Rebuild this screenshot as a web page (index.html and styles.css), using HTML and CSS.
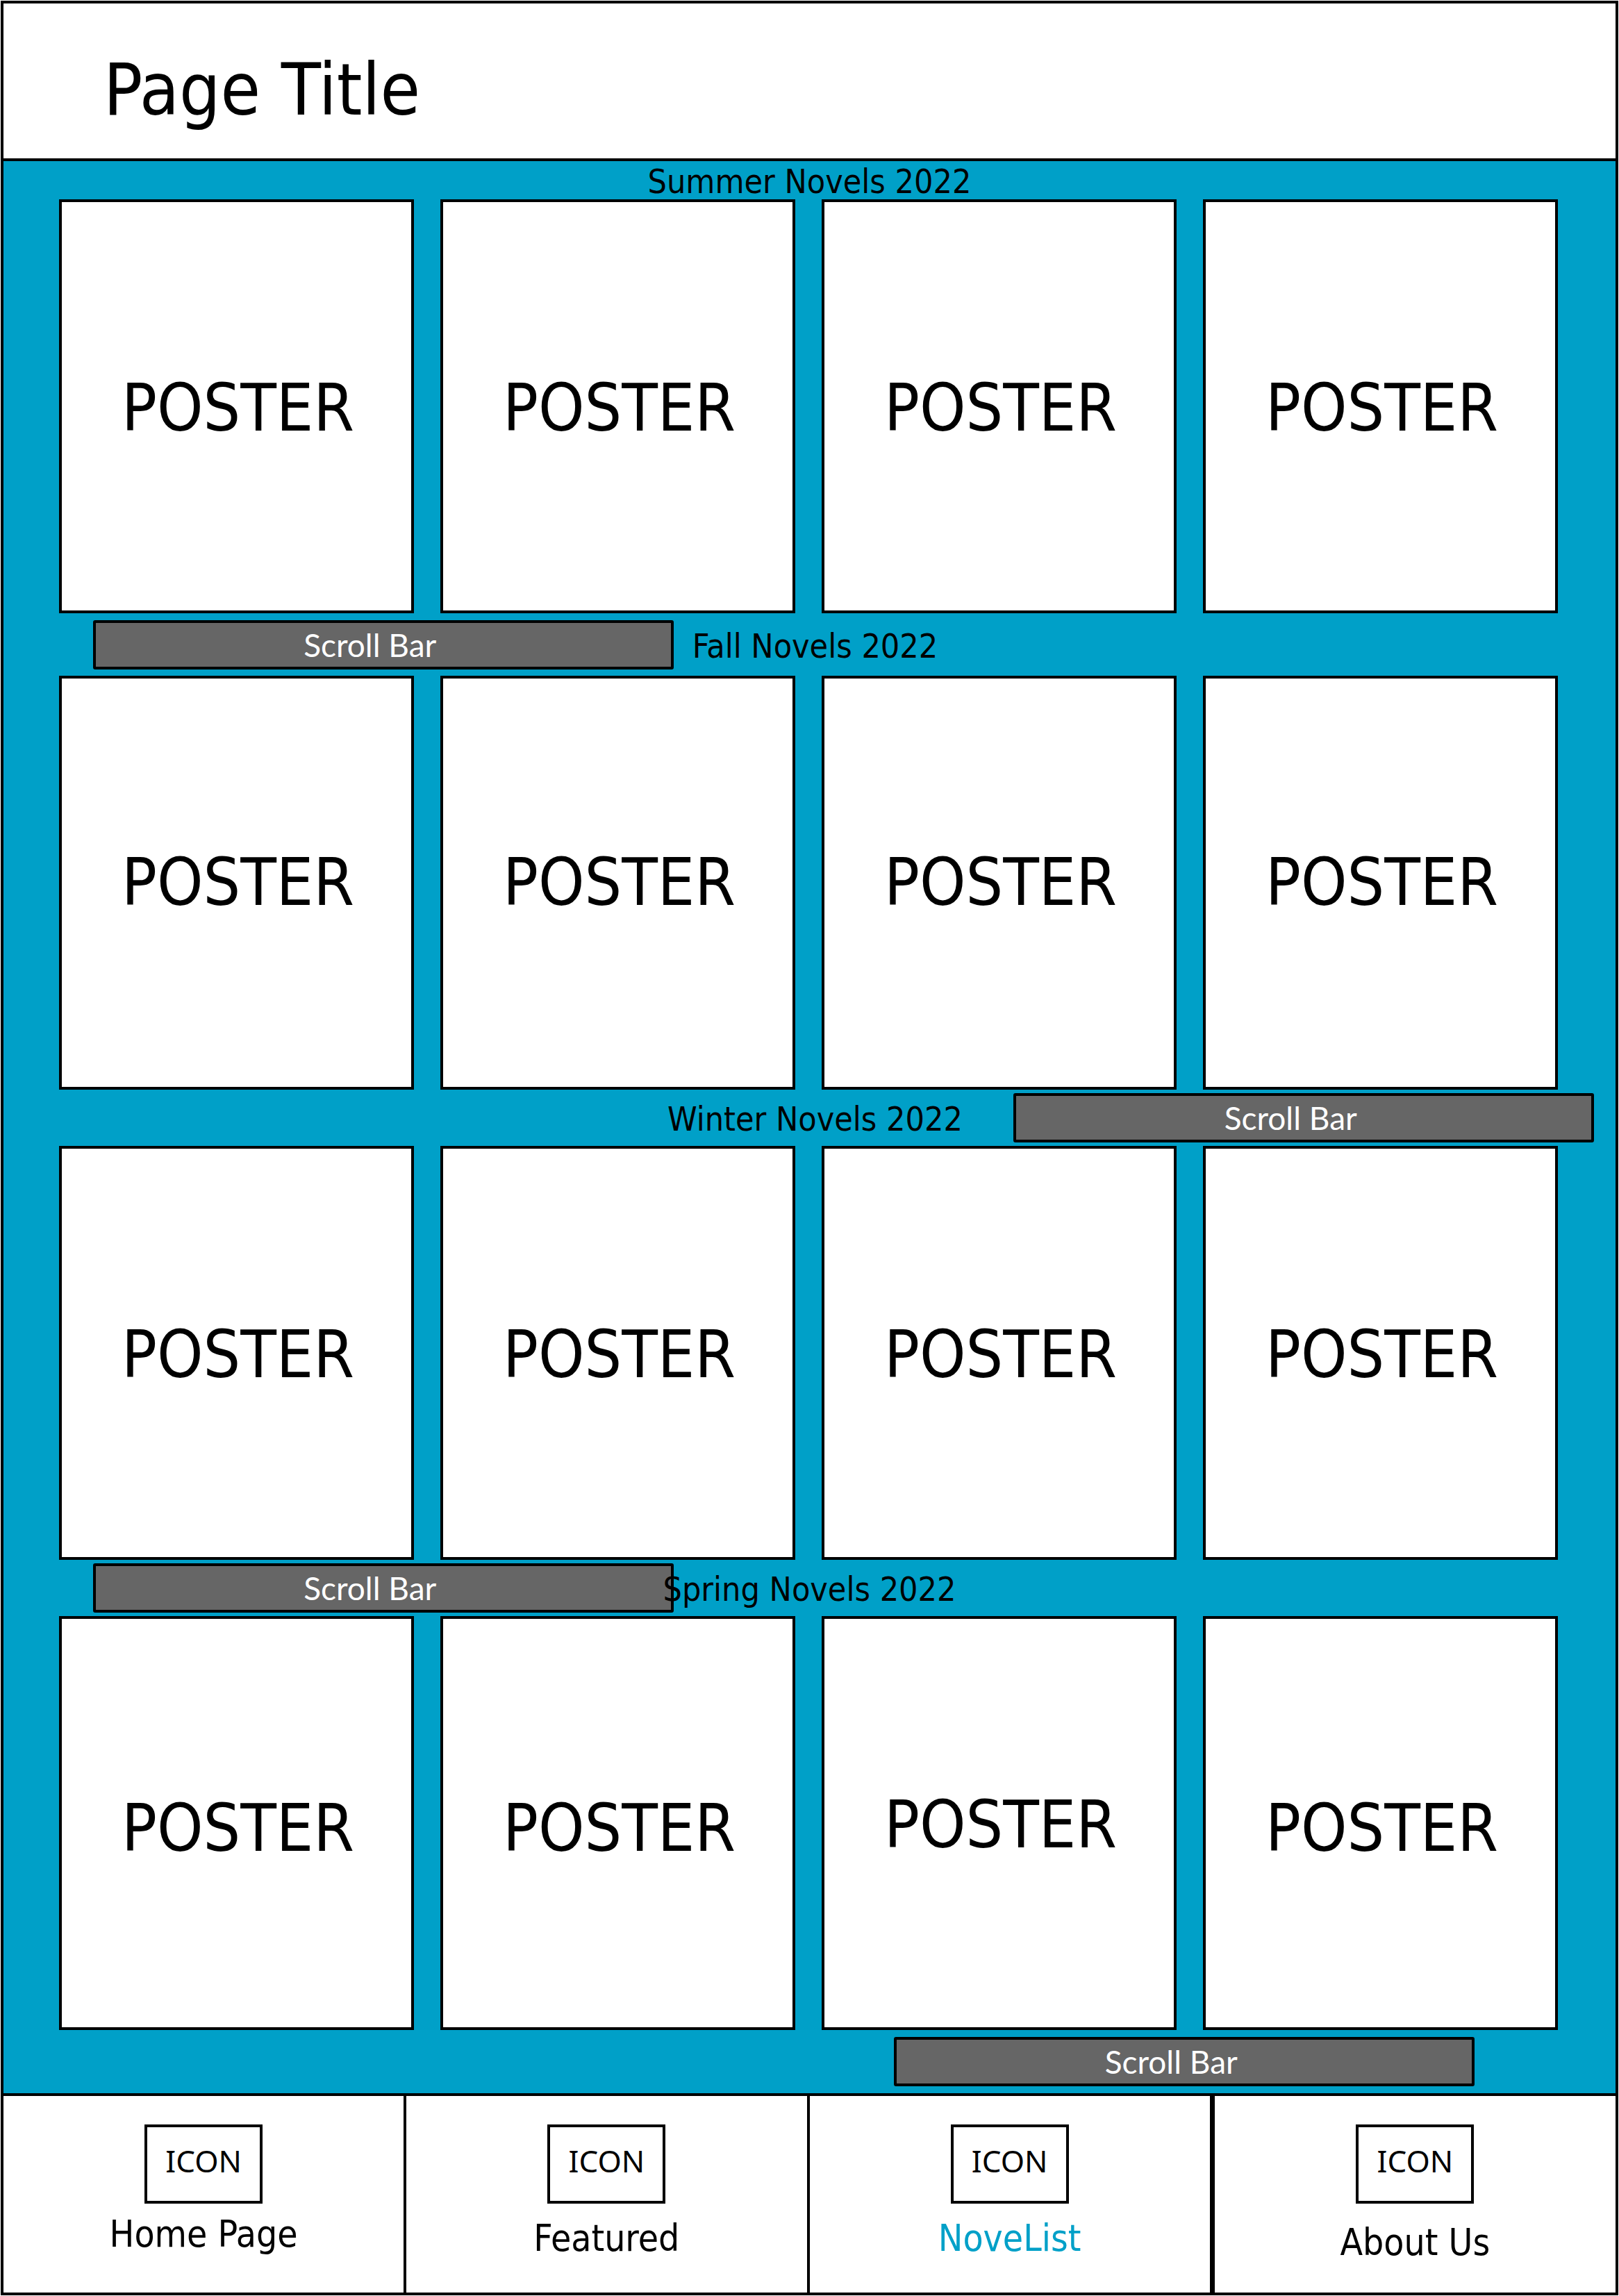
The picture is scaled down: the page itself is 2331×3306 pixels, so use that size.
FILE: index.html
```
<!DOCTYPE html>
<html lang="en">
<head>
<meta charset="utf-8">
<meta name="viewport" content="width=device-width, initial-scale=1">
<title>Page Title</title>
<link rel="stylesheet" href="styles.css">
</head>
<body>
<div class="page">
  <header class="page-header">
    <h1 class="page-title">Page Title</h1>
  </header>

  <main class="shelves">
    <section class="shelf">
      <div class="strip strip-first">
        <h2 class="strip-title">Summer Novels 2022</h2>
      </div>
      <ul class="posters">
        <li class="poster">POSTER</li>
        <li class="poster">POSTER</li>
        <li class="poster">POSTER</li>
        <li class="poster">POSTER</li>
      </ul>
    </section>

    <section class="shelf">
      <div class="strip strip-tall">
        <div class="scroll-bar scroll-bar-left">Scroll Bar</div>
        <h2 class="strip-title strip-title-inset">Fall Novels 2022</h2>
      </div>
      <ul class="posters">
        <li class="poster poster-high">POSTER</li>
        <li class="poster poster-high">POSTER</li>
        <li class="poster poster-high">POSTER</li>
        <li class="poster poster-high">POSTER</li>
      </ul>
    </section>

    <section class="shelf">
      <div class="strip">
        <div class="scroll-bar scroll-bar-right">Scroll Bar</div>
        <h2 class="strip-title strip-title-inset">Winter Novels 2022</h2>
      </div>
      <ul class="posters">
        <li class="poster">POSTER</li>
        <li class="poster">POSTER</li>
        <li class="poster">POSTER</li>
        <li class="poster">POSTER</li>
      </ul>
    </section>

    <section class="shelf">
      <div class="strip">
        <div class="scroll-bar scroll-bar-left">Scroll Bar</div>
        <h2 class="strip-title">Spring Novels 2022</h2>
      </div>
      <ul class="posters">
        <li class="poster poster-low">POSTER</li>
        <li class="poster poster-low">POSTER</li>
        <li class="poster">POSTER</li>
        <li class="poster poster-low">POSTER</li>
      </ul>
      <div class="strip strip-tall">
        <div class="scroll-bar scroll-bar-middle">Scroll Bar</div>
      </div>
    </section>
  </main>

  <nav class="tabs" aria-label="Main">
    <a class="tab" href="#home"><span class="tab-icon">ICON</span><span class="tab-label tab-label-high">Home Page</span></a>
    <a class="tab" href="#featured"><span class="tab-icon">ICON</span><span class="tab-label">Featured</span></a>
    <a class="tab tab-current" href="#novelist" aria-current="page"><span class="tab-icon">ICON</span><span class="tab-label">NoveList</span></a>
    <a class="tab" href="#about"><span class="tab-icon">ICON</span><span class="tab-label tab-label-low">About Us</span></a>
  </nav>
</div>
</body>
</html>
```

FILE: styles.css
```
:root {
  --blue: #00a0c8;
  --gray: #666666;
  --line: 4px solid #000;
}

* {
  box-sizing: border-box;
}

body {
  margin: 0;
  padding: 1px;
  background: #fff;
  color: #000;
  font-family: "DejaVu Sans Condensed", "DejaVu Sans", sans-serif;
}

.page {
  display: flex;
  flex-direction: column;
  min-height: calc(100vh - 2px);
  border: var(--line);
}

.page-header {
  padding: 64px 144px 39px;
  border-bottom: var(--line);
}

.page-title {
  margin: 0;
  font-size: 104px;
  font-weight: 400;
  line-height: 120px;
}

.shelves {
  flex: 1;
  background: var(--blue);
}

/* The title and the bar share one cell, so a long title may run over the bar. */
.strip {
  display: grid;
  align-items: center;
  height: 81px;
}

.strip-first {
  height: 55px;
}

.strip-tall {
  height: 90px;
}

.strip-title,
.scroll-bar {
  grid-area: 1 / 1;
}

.strip-title {
  justify-self: center;
  margin: 0;
  padding-top: 4px;
  font-size: 48px;
  font-weight: 400;
  line-height: 51px;
}

.strip-title-inset {
  padding-left: 16px;
}

.scroll-bar {
  width: 36%;
  padding-right: 38px;
  border: var(--line);
  border-radius: 3px;
  background: var(--gray);
  color: #fff;
  font-family: Lato, "Open Sans", sans-serif;
  font-size: 46px;
  line-height: 63px;
  text-align: center;
}

.scroll-bar-left {
  margin-left: 129px;
}

.scroll-bar-middle {
  justify-self: end;
  margin-right: 203px;
}

.scroll-bar-right {
  justify-self: end;
  margin-right: 31px;
}

.posters {
  display: grid;
  grid-template-columns: repeat(4, 1fr);
  gap: 38px;
  margin: 0;
  padding: 0 83px 0 80px;
  list-style: none;
}

.poster {
  display: flex;
  align-items: center;
  justify-content: center;
  aspect-ratio: 511 / 596;
  padding-top: 6px;
  padding-left: 4px;
  border: var(--line);
  background: #fff;
  font-size: 94px;
  line-height: 108px;
}

.poster-high {
  padding-top: 0;
}

.poster-low {
  padding-top: 16px;
}

.tabs {
  display: grid;
  grid-template-columns: repeat(4, 1fr);
  border-top: var(--line);
}

.tab {
  display: flex;
  flex-direction: column;
  align-items: center;
  gap: 18px;
  height: 283px;
  padding-top: 41px;
  border-right: var(--line);
  background: #fff;
  color: #000;
  text-decoration: none;
}

.tab:last-child {
  border-right: 0;
  border-left: 3px solid #000;
}

.tab-icon {
  width: 170px;
  height: 114px;
  border: var(--line);
  color: #000;
  font-family: "Noto Sans", sans-serif;
  font-size: 44px;
  line-height: 96px;
  text-align: center;
}

.tab-label {
  font-size: 53px;
  line-height: 64px;
}

.tab-label-high {
  margin-top: -6px;
}

.tab-label-low {
  margin-top: 6px;
}

.tab-current {
  color: var(--blue);
}
```
